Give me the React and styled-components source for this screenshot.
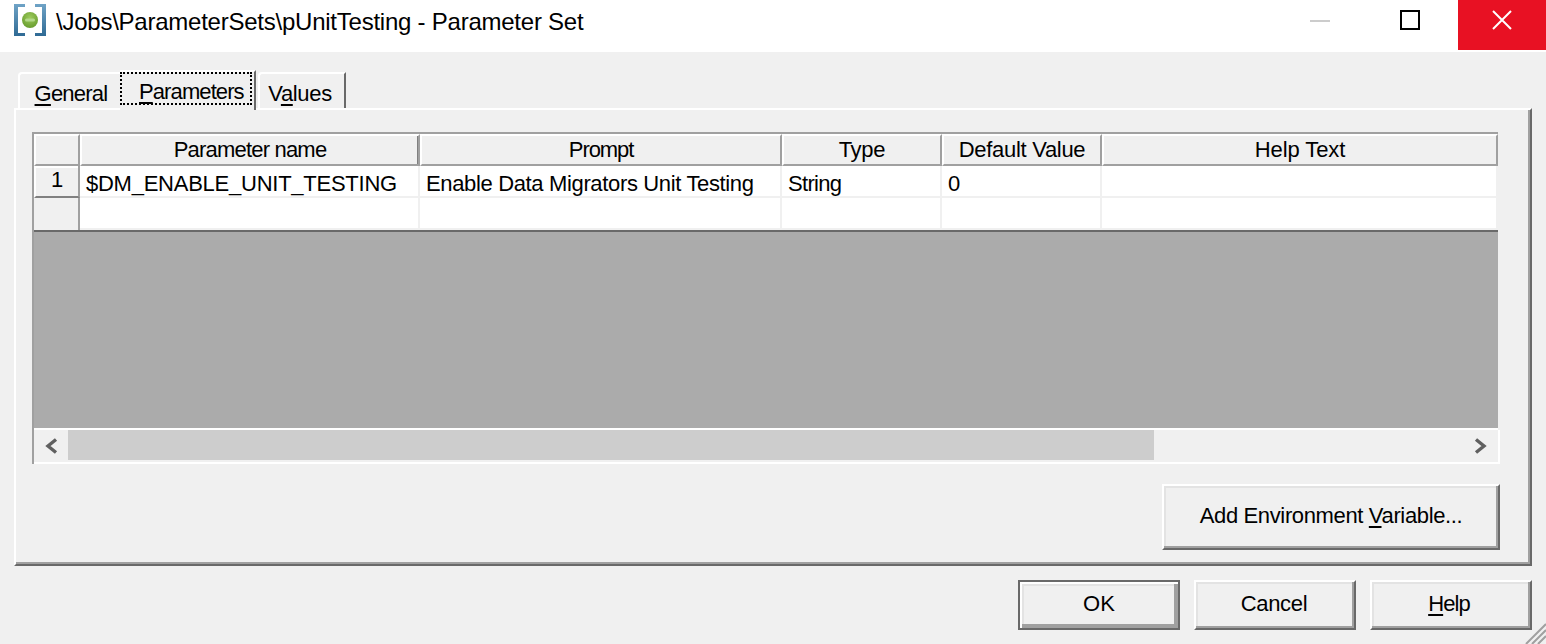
import styled, { createGlobalStyle } from "styled-components";

const Global = createGlobalStyle`
  html, body {
    margin: 0;
    padding: 0;
    background: #f0f0f0;
  }
  * {
    box-sizing: border-box;
  }
`;

const Win = styled.div`
  position: relative;
  width: 1546px;
  height: 644px;
  overflow: hidden;
  background: #f0f0f0;
  color: #000;
  font-family: "Liberation Sans", Arial, sans-serif;
  font-size: 22px;
`;

// the original font is narrower than Arial, so each label gets its own tracking
const Label = styled.span`
  letter-spacing: ${(p) => p.$ls || 0}px;
  white-space: nowrap;
`;

const TitleBar = styled.div`
  display: flex;
  align-items: flex-start;
  height: 52px;
  background: #fff;
`;

const TitleIcon = styled.svg`
  width: 32px;
  height: 32px;
  margin: 4px 10px 0 14px;
  flex: none;
`;

const TitleText = styled.div`
  flex: 1;
  padding-top: 7px;
  font-size: 24px;
  letter-spacing: -0.24px;
  line-height: 30px;
`;

const WinBtn = styled.div`
  display: flex;
  align-items: center;
  justify-content: center;
  height: 50px;
  width: ${(p) => p.$w}px;
  background: ${(p) => (p.$close ? "#e81123" : "transparent")};
`;

const MinGlyph = styled.div`
  width: 20px;
  height: 2px;
  background: #ccc;
  margin-top: -8px;
`;

const MaxGlyph = styled.div`
  width: 20px;
  height: 20px;
  border: 2px solid #000;
  margin-top: -10px;
`;

const CloseGlyph = styled.svg`
  width: 20px;
  height: 20px;
  margin-top: -10px;
`;

const TabStrip = styled.div`
  display: flex;
  align-items: flex-end;
  height: 56px;
  padding-left: 18px;
`;

const Tab = styled.div`
  display: flex;
  justify-content: center;
  width: ${(p) => p.$w}px;
  height: 36px;
  margin-left: ${(p) => p.$ml || 0}px;
  padding: 5px ${(p) => p.$pr || 0}px 0 ${(p) => p.$pl || 0}px;
  border-top: 2px solid #fff;
  border-left: 2px solid #fff;
  border-top-left-radius: 4px;
  border-right: ${(p) => (p.$edge ? "2px solid #696969" : "0")};
  background: #f0f0f0;
  line-height: 30px;
`;

const ActiveTab = styled.div`
  position: relative;
  z-index: 2;
  width: 136px;
  height: 40px;
  margin-bottom: -2px;
  border-top: 2px solid #fff;
  border-right: 2px solid #696969;
  background: #f0f0f0;
  line-height: 30px;
`;

const Focus = styled.div`
  height: 33px;
  width: 132px;
  padding: 3px 0 0 17px;
  border: 2px dotted #000;
`;

const Panel = styled.div`
  display: flex;
  flex-direction: column;
  width: 1518px;
  height: 458px;
  margin-left: 14px;
  padding: 22px 0 0 16px;
  border: 2px solid;
  border-color: #fff #696969 #696969 #fff;
  box-shadow: inset -2px -2px 0 #a0a0a0;
`;

const GridFrame = styled.div`
  width: 1466px;
  border-top: 2px solid #a0a0a0;
  border-left: 2px solid #a0a0a0;
`;

const Table = styled.div`
  display: grid;
  grid-template-columns: 46px 340px 362px 160px 160px 396px;
  grid-auto-rows: 32px;
  border-bottom: 2px solid #696969;
`;

const Head = styled.div`
  text-align: center;
  background: #f0f0f0;
  border: 2px solid;
  border-color: #fff #a0a0a0 #a0a0a0 #fff;
  line-height: 28px;
  box-shadow: ${(p) => (p.$selected ? "inset -1px 0 0 #808080, 1px 0 0 #808080" : "none")};
`;

const RowHead = styled.div`
  text-align: center;
  background: #f0f0f0;
  border-right: 2px solid #a0a0a0;
  border-bottom: 2px solid #808080;
  border-left: 2px solid #fff;
  box-shadow: inset 0 2px 0 #fff;
  line-height: 28px;
`;

const EmptyRowHead = styled(RowHead)`
  box-shadow: none;
  border-left: 0;
  border-bottom: 0;
`;

const Cell = styled.div`
  padding-left: 6px;
  background: #fff;
  border-right: 2px solid #f0f0f0;
  border-bottom: 2px solid #f0f0f0;
  line-height: 36px;
`;

const Empty = styled.div`
  height: 198px;
  background: #ababab;
  border-bottom: 2px solid #fff;
`;

const HScroll = styled.div`
  display: flex;
  height: 34px;
  margin-right: -2px;
  background: #f0f0f0;
  border-right: 2px solid #fff;
  border-bottom: 2px solid #fff;
`;

const ScrollArrow = styled.div`
  display: flex;
  align-items: center;
  justify-content: center;
  width: 34px;
  flex: none;
`;

const ChevronIcon = styled.svg`
  width: 14px;
  height: 16px;
  transform: ${(p) => (p.$flip ? "scaleX(-1)" : "none")};
`;

const Track = styled.div`
  flex: 1;
  height: 30px;
`;

const Thumb = styled.div`
  height: 30px;
  width: 1086px;
  background: #cdcdcd;
`;

const PanelActions = styled.div`
  display: flex;
  justify-content: flex-end;
  width: 1468px;
  margin-top: 20px;
`;

const Btn = styled.div`
  display: flex;
  align-items: center;
  justify-content: center;
  width: ${(p) => p.$w}px;
  height: ${(p) => p.$h}px;
  padding: 0 ${(p) => p.$pr || 0}px 3px 0;
  background: #f0f0f0;
  border: 2px solid;
  border-color: ${(p) => (p.$default ? "#696969" : "#fff #696969 #696969 #fff")};
  box-shadow: ${(p) =>
    p.$default
      ? "inset 2px 2px 0 #fff, inset -4px -4px 0 #a0a0a0, inset 4px 4px 0 #e3e3e3"
      : "inset -2px -2px 0 #a0a0a0, inset 2px 2px 0 #e3e3e3"};
`;

const Footer = styled.div`
  display: flex;
  justify-content: flex-end;
  gap: 14px;
  padding: 14px 14px 0 0;
`;

const Key = styled.span`
  text-decoration: underline;
  text-decoration-skip-ink: none;
  text-underline-offset: 3px;
  text-decoration-thickness: 2px;
`;

const Grip = styled.svg`
  position: absolute;
  right: 0;
  bottom: 0;
  width: 22px;
  height: 22px;
`;

const Chevron = ({ flip }) => (
  <ChevronIcon viewBox="0 0 14 16" $flip={flip}>
    <path d="M12 1.500 4 8l8 6.500" fill="none" stroke="#606060" strokeWidth="3.400" />
  </ChevronIcon>
);

const Columns = [
  { name: "Parameter name", ls: -0.8 },
  { name: "Prompt", ls: -1.1 },
  { name: "Type", ls: -0.25 },
  { name: "Default Value", ls: -0.3 },
  { name: "Help Text", ls: -0.1 },
];

const App = () => {
  return (
    <Win>
      <Global />
      <TitleBar>
        <TitleIcon viewBox="0 0 32 32">
          <defs>
            <radialGradient id="ball" cx="0.5" cy="0.35" r="0.7">
              <stop offset="0" stopColor="#9cca5c" />
              <stop offset="1" stopColor="#659a2b" />
            </radialGradient>
            <linearGradient id="bracket" x1="0" y1="0" x2="0" y2="1">
              <stop offset="0" stopColor="#6fa3c6" />
              <stop offset="1" stopColor="#2f6a94" />
            </linearGradient>
          </defs>
          <path d="M11 0H0v32h11v-3H4V3h7z" fill="url(#bracket)" />
          <path d="M21 0h11v32H21v-3h7V3h-7z" fill="url(#bracket)" />
          <circle cx="16" cy="16" r="8" fill="url(#ball)" />
          <rect x="11" y="14.500" width="10" height="3" rx="1.500" fill="#b4d98a" />
        </TitleIcon>
        <TitleText>\Jobs\ParameterSets\pUnitTesting - Parameter Set</TitleText>
        <WinBtn $w={84}>
          <MinGlyph />
        </WinBtn>
        <WinBtn $w={96}>
          <MaxGlyph />
        </WinBtn>
        <WinBtn $w={88} $close>
          <CloseGlyph viewBox="0 0 20 20">
            <path d="M1 1l18 18M19 1 1 19" stroke="#fff" strokeWidth="2" />
          </CloseGlyph>
        </WinBtn>
      </TitleBar>
      <TabStrip>
        <Tab $w={102} $pl={2}>
          <Label $ls={-0.77}>
            <Key>G</Key>eneral
          </Label>
        </Tab>
        <ActiveTab>
          <Focus>
            <Label $ls={-0.9}>
              <Key>P</Key>arameters
            </Label>
          </Focus>
        </ActiveTab>
        <Tab $w={88} $edge $ml={2} $pr={4}>
          <Label $ls={-0.33}>
            V<Key>a</Key>lues
          </Label>
        </Tab>
      </TabStrip>
      <Panel>
        <GridFrame>
          <Table>
            <Head />
            {Columns.map((c, i) => (
              <Head key={c.name} $selected={i === 0}>
                <Label $ls={c.ls}>{c.name}</Label>
              </Head>
            ))}
            <RowHead>1</RowHead>
            <Cell>
              <Label $ls={-0.25}>$DM_ENABLE_UNIT_TESTING</Label>
            </Cell>
            <Cell>
              <Label $ls={-0.35}>Enable Data Migrators Unit Testing</Label>
            </Cell>
            <Cell>
              <Label $ls={-0.7}>String</Label>
            </Cell>
            <Cell>0</Cell>
            <Cell />
            <EmptyRowHead />
            <Cell />
            <Cell />
            <Cell />
            <Cell />
            <Cell />
          </Table>
          <Empty />
          <HScroll>
            <ScrollArrow>
              <Chevron />
            </ScrollArrow>
            <Track>
              <Thumb />
            </Track>
            <ScrollArrow>
              <Chevron flip />
            </ScrollArrow>
          </HScroll>
        </GridFrame>
        <PanelActions>
          <Btn $w={338} $h={66}>
            <Label $ls={-0.36}>
              Add Environment <Key>V</Key>ariable...
            </Label>
          </Btn>
        </PanelActions>
      </Panel>
      <Footer>
        <Btn $w={162} $h={50} $default>
          OK
        </Btn>
        <Btn $w={162} $h={50} $pr={2}>
          <Label $ls={-0.3}>Cancel</Label>
        </Btn>
        <Btn $w={162} $h={50} $pr={4}>
          <Label $ls={-0.9}>
            <Key>H</Key>elp
          </Label>
        </Btn>
      </Footer>
      <Grip viewBox="0 0 22 22">
        <path d="M22 2 2 22M22 8 8 22M22 14 14 22" stroke="#a0a0a0" strokeWidth="2" />
      </Grip>
    </Win>
  );
};

export default App;
